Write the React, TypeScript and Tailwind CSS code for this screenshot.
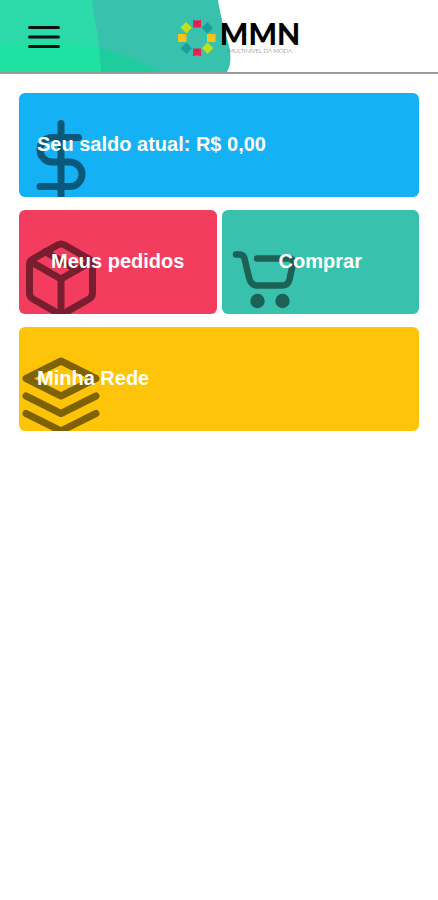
import { ReactNode } from "react";
import { FiDollarSign, FiLayers, FiPackage } from "react-icons/fi";

const iconClass = "absolute left-0 top-[27px] size-[84px] text-black opacity-50";

type CardProps = {
    label: string;
    className: string;
    icon: ReactNode;
};

const Card = ({ label, className, icon }: CardProps) => (
    <button
        type="button"
        className={`relative flex h-[104px] items-center overflow-hidden rounded-md px-[18px] pb-0.5 text-xl font-bold leading-6 text-white ${className}`}
    >
        {icon}
        <span className="relative">{label}</span>
    </button>
);

const CartIcon = () => (
    <svg
        viewBox="0 0 84 84"
        className={iconClass}
        fill="none"
        stroke="currentColor"
        strokeWidth="6.5"
        strokeLinecap="round"
        strokeLinejoin="round"
    >
        <path d="M14 17.500h3q4.500 0 5.500 4l4.500 19q2 8 8 8h25q6 0 7.500-6l3.500-16q1-5-4-5H35" />
        <circle cx="35.5" cy="64" r="7.2" fill="currentColor" stroke="none" />
        <circle cx="60.5" cy="64" r="7.2" fill="currentColor" stroke="none" />
    </svg>
);

const HeaderWave = () => (
    <svg viewBox="0 0 240 72" className="absolute left-0 top-0 h-[72px] w-[240px]" aria-hidden="true">
        <path d="M0 0H218C221 18 224 29 228 42C231 53 232 63 227 72H0Z" fill="#38c1ad" />
        <path d="M0 0H92C94 18 98 32 99 46L101 72H0Z" fill="#2ddaa9" />
        <path d="M99 48C121 53 141 62 161 72H101Z" fill="#1dcd9e" />
        <path d="M0 45C34 41 68 41 99 48L101 72H0Z" fill="#1fe1a1" />
    </svg>
);

const LogoMark = () => (
    <svg viewBox="0 0 38 38" className="size-[38px]" aria-hidden="true">
        <path d="M15 0.500l2 1h4l2-1v8h-8z" fill="#ee1d55" />
        <path d="M15 37.500l2-1h4l2 1v-8h-8z" fill="#ee1d55" />
        <path d="M0 15h8.500v8H0z" fill="#fbc116" />
        <path d="M29 15h8.500v8H29z" fill="#fbc116" />
        <path d="M8 3l6 5.500-5.500 6-6-6z" fill="#bfe01f" />
        <path d="M29.500 23.500l6 5.500-6 6-5.500-6z" fill="#bfe01f" />
        <path d="M29.500 3l5.500 6-5.500 5.500-6-5.500z" fill="#16a09c" />
        <path d="M8.500 23.500l5.500 6-5.500 5.500-6-5.500z" fill="#16a09c" />
        <path d="M17.500 3q1.500 2 3 0M17.500 32q1.500-2 3 0" fill="none" stroke="#b5123f" strokeWidth="1" />
    </svg>
);

const Logo = () => (
    <div className="flex items-start gap-1">
        <LogoMark />
        <div className="flex flex-col items-center font-['Lato',sans-serif]">
            <span className="text-[30px] font-black leading-7 text-black">MMN</span>
            <span className="text-[6px] font-light leading-2 text-gray-600">MULTINÍVEL DA MODA</span>
        </div>
    </div>
);

export default function App() {
    return (
        <div className="min-h-screen bg-white font-['Liberation_Sans',sans-serif]">
            <header className="relative flex h-[74px] items-center border-b-2 border-[#999] pl-7 pt-0.5">
                <HeaderWave />
                <button type="button" aria-label="Menu" className="relative">
                    <svg viewBox="0 0 32 24" className="h-6 w-8" stroke="#06120e" strokeWidth="3" strokeLinecap="round">
                        <path d="M1.500 2.500h29M1.500 12h29M1.500 21.500h29" />
                    </svg>
                </button>
                <div className="relative flex flex-1 justify-center pr-5 pt-0.5">
                    <Logo />
                </div>
            </header>
            <main className="grid grid-cols-2 gap-x-[5px] gap-y-[13px] px-[19px] pt-[19px]">
                <Card
                    label="Seu saldo atual: R$ 0,00"
                    className="col-span-2 bg-[#14b1f4]"
                    icon={<FiDollarSign className={iconClass} />}
                />
                <Card
                    label="Meus pedidos"
                    className="justify-center bg-[#f33d5f]"
                    icon={<FiPackage className={iconClass} />}
                />
                <Card label="Comprar" className="justify-center bg-[#38c1ad]" icon={<CartIcon />} />
                <Card
                    label="Minha Rede"
                    className="col-span-2 bg-[#fec409]"
                    icon={<FiLayers className={iconClass} />}
                />
            </main>
        </div>
    );
}
